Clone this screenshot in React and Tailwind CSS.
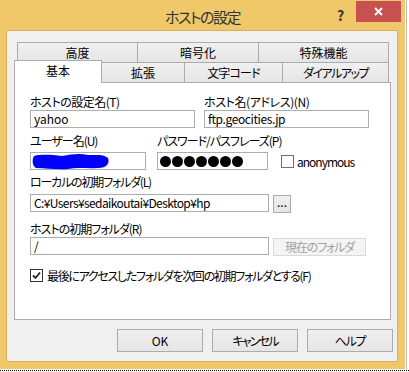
import React from 'react';

const font = "font-['Meiryo_UI','Noto_Sans_CJK_JP',sans-serif] [font-feature-settings:'palt']";

const BackTab = ({ label, className }) => (
    <div className={`flex h-[20px] items-center justify-center border-l border-t border-[#acacac] bg-gradient-to-b from-[#f0f0f0] to-[#e5e5e5] text-[12px] leading-none text-black ${className}`}>
        {label}
    </div>
);

const FrontTab = ({ label, className }) => (
    <div className={`mt-[2px] flex h-[20px] items-center justify-center border-l border-t border-[#acacac] bg-gradient-to-b from-[#f0f0f0] to-[#e5e5e5] text-[12px] leading-none text-black ${className}`}>
        {label}
    </div>
);

const Label = ({ children, className = '' }) => (
    <div className={`h-[16px] whitespace-nowrap text-[12px] leading-[16px] text-black ${className}`}>{children}</div>
);

const TextBox = ({ children, className = '' }) => (
    <div className={`flex h-[18px] items-center whitespace-nowrap border border-[#abadb3] bg-white px-[3px] text-[12px] leading-none text-black ${className}`}>
        {children}
    </div>
);

const Button = ({ children, className = '' }) => (
    <div className={`flex items-center justify-center border border-[#acacac] bg-gradient-to-b from-[#f0f0f0] to-[#e5e5e5] text-[12px] leading-none text-black ${className}`}>
        {children}
    </div>
);

export default function App() {
    return (
        <div className={`flex h-[372px] w-[409px] flex-col bg-white ${font}`}>
            <div className="flex">
                <div className="flex h-[369px] w-[405px] flex-col bg-[#f0c869]">
                    {/* Title bar */}
                    <div className="relative flex h-[30px] items-center justify-center pt-[4px]">
                        <span className="text-[15px] tracking-[-1.5px] text-[#333]">ホストの設定</span>
                        <span className="absolute left-[337px] top-[5px] text-[14px] font-bold text-[#333]">?</span>
                        <div className="absolute right-[4px] top-[1px] flex h-[21px] w-[45px] items-center justify-center bg-[#c75050]">
                            <svg width="9" height="9" viewBox="0 0 9 9">
                                <path d="M1 1L8 8M8 1L1 8" stroke="white" strokeWidth="2" />
                            </svg>
                        </div>
                    </div>

                    {/* Client area */}
                    <div className="ml-[6px] mr-[7px] mb-[7px] flex flex-1 flex-col border border-[#d9b15d] bg-[#f0f0f0]">
                        <div className="ml-[7px] mt-[11px] flex w-[377px] flex-col">
                            <div className="ml-[3px] flex">
                                <BackTab label="高度" className="w-[120px]" />
                                <BackTab label="暗号化" className="w-[121px]" />
                                <BackTab label="特殊機能" className="w-[131px] border-r" />
                            </div>
                            <div className="relative z-10 -mt-[2px] flex h-[22px] items-start">
                                <div className="flex h-[23px] w-[88px] items-center justify-center border-l border-r border-t border-[#acacac] bg-white pb-[2px] text-[12px] leading-none text-black">
                                    基本
                                </div>
                                <FrontTab label="拡張" className="w-[82px] border-l-0" />
                                <FrontTab label="文字コード" className="w-[98px] tracking-[-0.8px]" />
                                <FrontTab label="ダイアルアップ" className="w-[107px] border-r tracking-[-1.5px]" />
                            </div>
                            <div className="flex h-[238px] flex-col border border-[#acacac] bg-white pl-[15px] pt-[11px]">
                                <div className="flex gap-[9px]">
                                    <div className="flex w-[165px] flex-col">
                                        <Label className="tracking-[-0.5px]">ホストの設定名(T)</Label>
                                        <TextBox>yahoo</TextBox>
                                    </div>
                                    <div className="flex w-[165px] flex-col">
                                        <Label className="tracking-[-0.4px]">ホスト名(アドレス)(N)</Label>
                                        <TextBox className="tracking-[-0.4px]">ftp.geocities.jp</TextBox>
                                    </div>
                                </div>

                                <div className="mt-[5px] flex items-end">
                                    <div className="flex w-[116px] flex-col">
                                        <Label className="mb-[3px] tracking-[-1px]">ユーザー名(U)</Label>
                                        <TextBox className="relative px-0">
                                            <svg className="absolute left-[1px] top-[0px]" width="78" height="17" viewBox="0 0 78 17">
                                                <path
                                                    d="M2 3 C10 1 20 2 30 3 C40 1 48 0 56 2 C64 2 72 1 76 5 C78 10 75 15 66 15 C56 16 46 14 36 16 C26 17 14 15 4 15 C0 13 0 6 2 3 Z"
                                                    fill="#0000ff"
                                                />
                                            </svg>
                                        </TextBox>
                                    </div>
                                    <div className="ml-[11px] flex w-[111px] flex-col">
                                        <Label className="mb-[3px] tracking-[-1px]">パスワード/パスフレーズ(P)</Label>
                                        <TextBox className="gap-[1px] pl-[2px]">
                                            {[0, 1, 2, 3, 4, 5, 6].map((i) => (
                                                <span key={i} className="h-[11px] w-[11px] rounded-full bg-black" />
                                            ))}
                                        </TextBox>
                                    </div>
                                    <div className="mb-[2px] ml-[13px] flex items-center gap-[3px]">
                                        <span className="h-[13px] w-[13px] border border-[#707070] bg-white" />
                                        <span className="text-[12px] leading-none tracking-[-1px] text-black">anonymous</span>
                                    </div>
                                </div>

                                <Label className="mt-[4px] tracking-[-1.2px]">ローカルの初期フォルダ(L)</Label>
                                <div className="mt-[4px] flex items-start gap-[4px]">
                                    <TextBox className="w-[239px] border-[#569de5] tracking-[-0.6px]">C:¥Users¥sedaikoutai¥Desktop¥hp</TextBox>
                                    <Button className="mt-[1px] h-[18px] w-[18px] pb-[4px]">...</Button>
                                </div>

                                <Label className="mt-[8px] tracking-[-1px]">ホストの初期フォルダ(R)</Label>
                                <div className="flex items-start gap-[4px]">
                                    <TextBox className="w-[239px]">/</TextBox>
                                    <div className="mt-[1px] flex h-[18px] w-[93px] items-center justify-center border border-[#d9d9d9] bg-[#f4f4f4] text-[12px] leading-none tracking-[-1.2px] text-[#a0a0a0]">
                                        現在のフォルダ
                                    </div>
                                </div>

                                <div className="mt-[13px] flex items-center gap-[4px]">
                                    <span className="flex h-[13px] w-[13px] items-center justify-center border border-[#333] bg-white">
                                        <svg width="9" height="9" viewBox="0 0 9 9">
                                            <path d="M1 4.5L3.5 7L8 1.5" fill="none" stroke="#222" strokeWidth="1.8" />
                                        </svg>
                                    </span>
                                    <span className="whitespace-nowrap text-[12px] leading-none tracking-[-1.3px] text-black">最後にアクセスしたフォルダを次回の初期フォルダとする(F)</span>
                                </div>
                            </div>
                        </div>

                        <div className="mt-[9px] flex justify-end gap-[9px] pr-[4px]">
                            <Button className="h-[23px] w-[86px] border-[#3399ff]">OK</Button>
                            <Button className="h-[23px] w-[86px] tracking-[-1.8px]">キャンセル</Button>
                            <Button className="h-[23px] w-[86px] tracking-[-1.3px]">ヘルプ</Button>
                        </div>
                    </div>
                </div>
                <div className="ml-[1px] h-[369px] w-px bg-[#b8b8b8]" />
            </div>
            <div className="mt-[1px] border-t border-dotted border-black" />
        </div>
    );
}
